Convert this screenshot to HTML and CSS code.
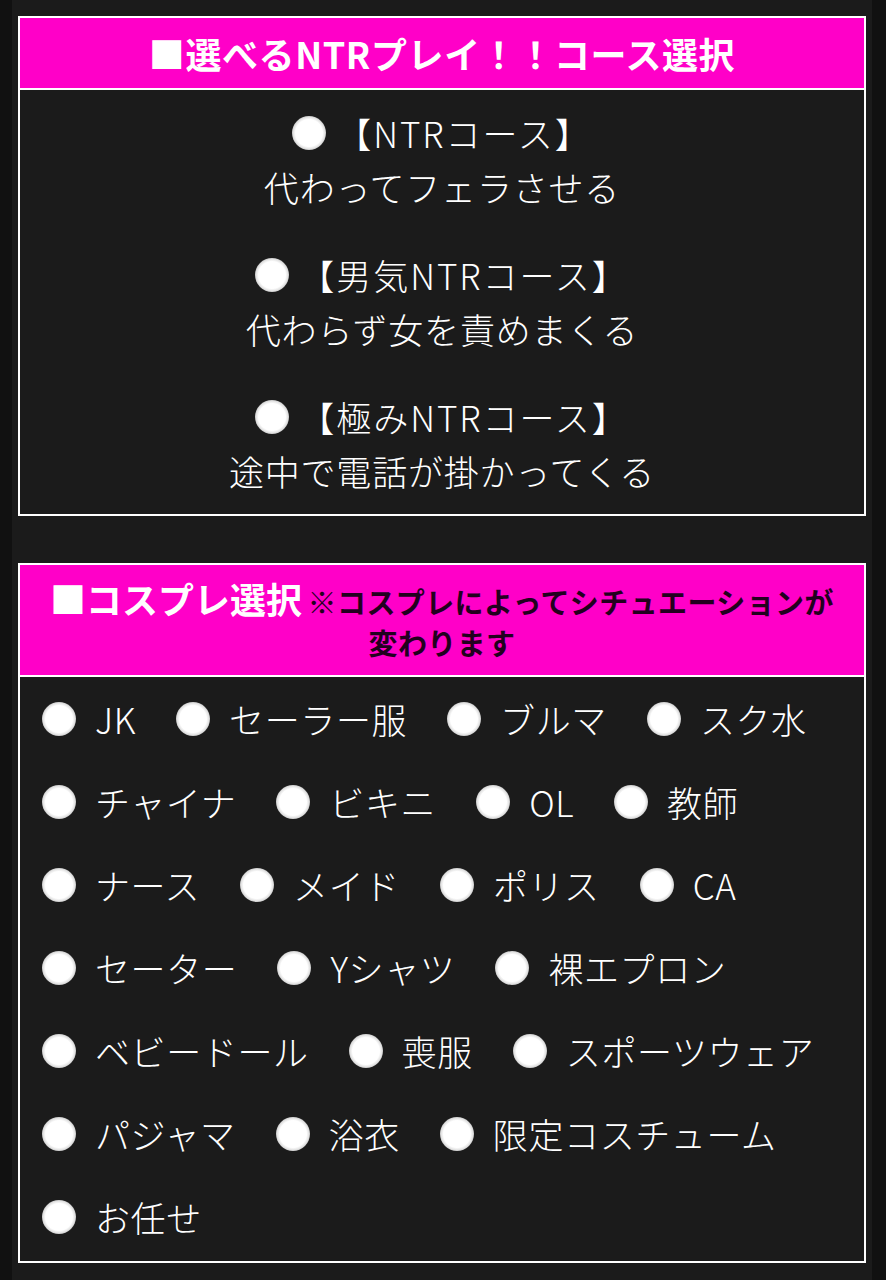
FILE: index.html
```html
<!DOCTYPE html>
<html lang="ja">
<head>
<meta charset="utf-8">
<title>コース選択</title>
<link rel="stylesheet" href="styles.css">
</head>
<body>
<div class="page">
  <section class="box">
    <h2 class="box-head head-single">■選べるNTRプレイ！！コース選択</h2>
    <div class="course-body">
      <label class="course">
        <span class="course-title"><input type="radio" name="course" class="radio"><span>【NTRコース】</span></span>
        <span class="course-desc">代わってフェラさせる</span>
      </label>
      <label class="course">
        <span class="course-title"><input type="radio" name="course" class="radio"><span>【男気NTRコース】</span></span>
        <span class="course-desc">代わらず女を責めまくる</span>
      </label>
      <label class="course">
        <span class="course-title"><input type="radio" name="course" class="radio"><span>【極みNTRコース】</span></span>
        <span class="course-desc">途中で電話が掛かってくる</span>
      </label>
    </div>
  </section>

  <section class="box box-second">
    <h2 class="box-head head-double"><span class="head-main">■コスプレ選択</span> <span class="head-note">※コスプレによってシチュエーションが<br>変わります</span></h2>
    <div class="cos-body">
      <label class="cos"><input type="radio" name="cos" class="radio"><span>JK</span></label>
      <label class="cos"><input type="radio" name="cos" class="radio"><span>セーラー服</span></label>
      <label class="cos"><input type="radio" name="cos" class="radio"><span>ブルマ</span></label>
      <label class="cos"><input type="radio" name="cos" class="radio"><span>スク水</span></label>
      <label class="cos"><input type="radio" name="cos" class="radio"><span>チャイナ</span></label>
      <label class="cos"><input type="radio" name="cos" class="radio"><span>ビキニ</span></label>
      <label class="cos"><input type="radio" name="cos" class="radio"><span>OL</span></label>
      <label class="cos"><input type="radio" name="cos" class="radio"><span>教師</span></label>
      <label class="cos"><input type="radio" name="cos" class="radio"><span>ナース</span></label>
      <label class="cos"><input type="radio" name="cos" class="radio"><span>メイド</span></label>
      <label class="cos"><input type="radio" name="cos" class="radio"><span>ポリス</span></label>
      <label class="cos"><input type="radio" name="cos" class="radio"><span>CA</span></label>
      <label class="cos"><input type="radio" name="cos" class="radio"><span>セーター</span></label>
      <label class="cos"><input type="radio" name="cos" class="radio"><span>Yシャツ</span></label>
      <label class="cos"><input type="radio" name="cos" class="radio"><span>裸エプロン</span></label>
      <label class="cos"><input type="radio" name="cos" class="radio"><span>ベビードール</span></label>
      <label class="cos"><input type="radio" name="cos" class="radio"><span>喪服</span></label>
      <label class="cos"><input type="radio" name="cos" class="radio"><span>スポーツウェア</span></label>
      <label class="cos"><input type="radio" name="cos" class="radio"><span>パジャマ</span></label>
      <label class="cos"><input type="radio" name="cos" class="radio"><span>浴衣</span></label>
      <label class="cos"><input type="radio" name="cos" class="radio"><span>限定コスチューム</span></label>
      <label class="cos"><input type="radio" name="cos" class="radio"><span>お任せ</span></label>
    </div>
  </section>
</div>
</body>
</html>
```

FILE: styles.css
```css
html, body {
  margin: 0;
  padding: 0;
  background: #111111;
}

body {
  font-family: "Noto Sans CJK JP", "Noto Sans", sans-serif;
  color: #ffffff;
}

.page {
  margin: 0 14px 0 12px;
  background: #1b1b1b;
  padding: 16px 6px 19px;
  min-height: 1244px;
}

.box {
  border: 2px solid #ffffff;
  background: #1b1b1b;
}

.box-second {
  margin-top: 47px;
}

.box-head {
  margin: 0;
  background: #ff00c8;
  border-bottom: 2px solid #ffffff;
  text-align: center;
  font-weight: bold;
}

.head-single {
  font-size: 36px;
  letter-spacing: 0.6px;
  line-height: 70px;
  height: 70px;
  color: #ffffff;
}

.head-double {
  height: 112px;
  box-sizing: border-box;
  padding: 14px 0 20px;
  line-height: 38px;
}

.head-main {
  font-size: 36px;
  color: #ffffff;
}

.head-note {
  font-size: 29px;
  letter-spacing: 0.4px;
  color: #22001e;
}

.radio {
  appearance: none;
  -webkit-appearance: none;
  margin: 0;
  width: 34px;
  height: 34px;
  flex: 0 0 34px;
  border-radius: 50%;
  background: radial-gradient(circle, #ffffff 0, #ffffff 56%, #e2e2e2 66%, #a0a0a0 78%, #6e6e6e 90%, #2e2e2e 100%);
}

.course-body {
  padding: 16px 0 16px;
}

.course {
  display: flex;
  flex-direction: column;
  align-items: center;
  font-size: 35px;
  font-weight: 300;
  letter-spacing: 0.8px;
  line-height: 54px;
  margin-bottom: 34px;
}

.course:last-child {
  margin-bottom: 0;
}

.course-title {
  display: flex;
  align-items: center;
  gap: 10px;
  letter-spacing: 2px;
}

.cos-body {
  display: flex;
  flex-wrap: wrap;
  column-gap: 40px;
  padding: 0 6px 3px 22px;
}

.cos {
  display: inline-flex;
  align-items: center;
  gap: 19px;
  height: 83px;
  font-size: 35px;
  font-weight: 300;
  letter-spacing: 0.6px;
}
```
